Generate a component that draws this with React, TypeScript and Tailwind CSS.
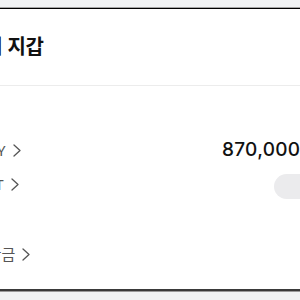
import { ReactNode } from "react";

function Chevron() {
  return (
    <svg width="8" height="13" viewBox="0 0 8 13" fill="none" className="shrink-0">
      <path d="M1 1l6 5.5L1 12" stroke="#555" strokeWidth="1.3" strokeLinecap="round" strokeLinejoin="round" />
    </svg>
  );
}

function Row({ label, labelClass, children }: { label: string; labelClass: string; children?: ReactNode }) {
  return (
    <div className="flex h-[34px] items-center">
      <div className={`flex w-[267px] items-center gap-[7px] text-[15px] text-[#555] ${labelClass}`}>
        <span className="whitespace-nowrap">{label}</span>
        <Chevron />
      </div>
      {children}
    </div>
  );
}

export default function App() {
  return (
    <div className="h-[300px] w-[300px] overflow-hidden bg-[#f1f3f4] font-['Noto_Sans','Noto_Sans_CJK_KR',sans-serif]">
      <div className="h-[7px]" />
      <div className="h-px bg-[#a5a5a5]" />
      <div className="-mx-[45px] bg-white">
        <div className="h-px bg-black" />
        <div className="flex h-[76px] items-center pl-[29px]">
          <h2 className="whitespace-nowrap text-[20px] font-bold tracking-tight text-[#111] [word-spacing:1px]">내 지갑</h2>
        </div>
        <div className="h-px bg-[#ececec]" />
        <div className="h-[47px]" />
        <Row label="MONEY" labelClass="-ml-[3px]">
          <span className="ml-[3px] whitespace-nowrap font-['Inter',sans-serif] text-[19px] font-medium tracking-[0.3px] text-[#111]">870,000원</span>
        </Row>
        <Row label="POINT" labelClass="pl-[3px]">
          <div className="ml-[52px] mt-[5px] h-[25px] w-[54px] shrink-0 rounded-full bg-[#ebebed]" />
        </Row>
        <div className="h-[36px]" />
        <Row label="미수잔금" labelClass="pl-[5px]" />
        <div className="h-[18px]" />
        <div className="h-[2px] bg-[#3a3a3a]" />
      </div>
      <div className="h-px bg-[#9a9a9a]" />
    </div>
  );
}
